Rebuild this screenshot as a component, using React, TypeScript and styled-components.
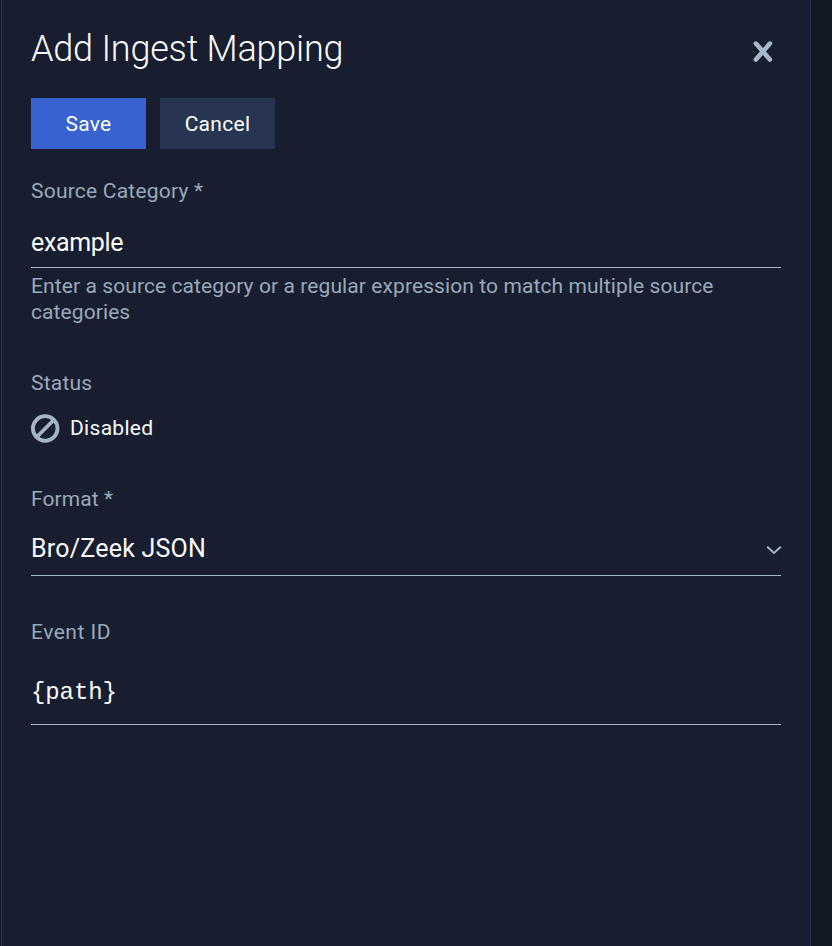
import React from 'react';
import styled, { createGlobalStyle } from 'styled-components';

const GlobalStyle = createGlobalStyle`
  *, *::before, *::after { box-sizing: border-box; }
  body {
    margin: 0;
    background: #121924;
    font-family: Roboto, "Liberation Sans", sans-serif;
    color: #fafbfc;
  }
`;

const Panel = styled.main`
  width: 810px;
  height: 946px;
  margin-left: 1px;
  padding: 25px 29px 0;
  border: solid #283652;
  border-width: 0 1px;
  background: #181e2f;
`;

const Header = styled.header`
  display: flex;
  justify-content: space-between;
  height: 73px;
`;

const Title = styled.h1`
  margin: 0;
  font-size: 36px;
  font-weight: 300;
  line-height: 48px;
  letter-spacing: -0.21px;
`;

const IconButton = styled.button`
  display: flex;
  align-self: flex-start;
  margin: 15px 7px 0 0;
  padding: 0;
  border: 0;
  background: none;
  color: #a8b9cb;
`;

const Actions = styled.div`
  display: flex;
  gap: 14px;
  margin-bottom: 29px;
`;

const Button = styled.button<{ $primary?: boolean }>`
  width: 115px;
  height: 51px;
  padding: 1px 0 0;
  border: 0;
  background: ${({ $primary }) => ($primary ? '#3762d0' : '#273552')};
  color: #fff;
  font: 400 21px/26px Roboto, sans-serif;
  letter-spacing: 0.3px;
`;

const Field = styled.section<{ $gap: number }>`
  display: flex;
  flex-direction: column;
  margin-bottom: ${({ $gap }) => $gap}px;
`;

const Label = styled.label<{ $tracking?: number }>`
  color: #98a9bb;
  font-size: 21px;
  line-height: 26px;
  letter-spacing: ${({ $tracking = 0.22 }) => $tracking}px;
`;

const Control = styled.div<{ $height: number; $top: number }>`
  display: flex;
  justify-content: space-between;
  height: ${({ $height }) => $height}px;
  padding-top: ${({ $top }) => $top}px;
  border-bottom: 1px solid #a3b7c8;
  line-height: 30px;
`;

const Value = styled.span<{ $mono?: boolean; $tracking?: number }>`
  font-family: ${({ $mono }) => ($mono ? '"Liberation Mono", monospace' : 'inherit')};
  font-size: ${({ $mono }) => ($mono ? 24 : 25)}px;
  letter-spacing: ${({ $tracking = 0 }) => $tracking}px;
`;

const Hint = styled.p`
  margin: 5px 0 0;
  color: #98a9bb;
  font-size: 21px;
  line-height: 26px;
  letter-spacing: 0.09px;
`;

const Status = styled.div`
  display: flex;
  align-items: center;
  gap: 10px;
  height: 30px;
  margin-top: 17px;
  font-size: 21px;
  letter-spacing: 0.3px;
`;

const Chevron = styled.svg`
  margin: 11px -1px 0 0;
`;

export default function App() {
  return (
    <>
      <GlobalStyle />
      <Panel>
        <Header>
          <Title>Add Ingest Mapping</Title>
          <IconButton aria-label="Close">
            <svg width="22" height="24" viewBox="0 0 22 24" fill="none" stroke="currentColor" strokeWidth="4.6" strokeLinecap="round">
              <path d="M3.9 3.6 17.9 19.6M17.9 3.6 3.9 19.6" />
            </svg>
          </IconButton>
        </Header>
        <Actions>
          <Button $primary>Save</Button>
          <Button>Cancel</Button>
        </Actions>
        <Field $gap={45}>
          <Label>Source Category *</Label>
          <Control $height={64} $top={24}>
            <Value $tracking={-0.35}>example</Value>
          </Control>
          <Hint>Enter a source category or a regular expression to match multiple source categories</Hint>
        </Field>
        <Field $gap={43}>
          <Label>Status</Label>
          <Status>
            <svg width="29" height="30" viewBox="0 0 29 30" fill="none" stroke="#a4b5c8" strokeWidth="3.8">
              <circle cx="14.2" cy="15.5" r="12.3" />
              <path d="M5.7 24 22.7 7" />
            </svg>
            Disabled
          </Status>
        </Field>
        <Field $gap={43}>
          <Label $tracking={0.1}>Format *</Label>
          <Control $height={64} $top={22}>
            <Value $tracking={0.22}>Bro/Zeek JSON</Value>
            <Chevron width="16" height="10" viewBox="0 0 16 10" fill="none" stroke="#a3b7c8" strokeWidth="2">
              <path d="M1.2 1.7 8 8 14.8 1.7" />
            </Chevron>
          </Control>
        </Field>
        <Field $gap={0}>
          <Label $tracking={0.5}>Event ID</Label>
          <Control $height={80} $top={33}>
            <Value $mono $tracking={-0.1}>{'{path}'}</Value>
          </Control>
        </Field>
      </Panel>
    </>
  );
}
